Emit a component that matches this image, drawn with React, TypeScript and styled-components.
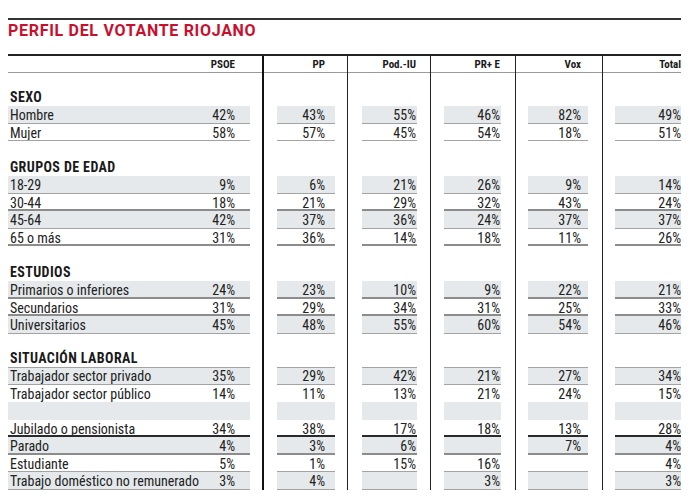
import styled, { createGlobalStyle, css } from "styled-components";

type Rule = "none" | "thin" | "thick" | "dark";

interface Row {
  label: string;
  values: string[];
  shade?: boolean;
  rule: Rule;
  top?: boolean;
}

interface Group {
  title: string;
  head: number;
  rows: Row[];
}

interface ColSpec {
  name: string;
  line: "none" | "heavy" | "light";
  ml: number;
  w: number;
  mr: number;
  pr: number;
}

const COLS: ColSpec[] = [
  { name: "PSOE", line: "none", ml: 0, w: 242, mr: 12, pr: 15 },
  { name: "PP", line: "heavy", ml: 13, w: 58, mr: 12, pr: 10 },
  { name: "Pod.-IU", line: "light", ml: 14, w: 55, mr: 13, pr: 1 },
  { name: "PR+ E", line: "light", ml: 13, w: 57, mr: 14, pr: 1 },
  { name: "Vox", line: "light", ml: 12, w: 60, mr: 14, pr: 7 },
  { name: "Total", line: "light", ml: 12, w: 66, mr: 0, pr: 0 },
];

const GROUPS: Group[] = [
  {
    title: "SEXO",
    head: 33,
    rows: [
      { label: "Hombre", values: ["42%", "43%", "55%", "46%", "82%", "49%"], shade: true, rule: "thin" },
      { label: "Mujer", values: ["58%", "57%", "45%", "54%", "18%", "51%"], rule: "thin" },
    ],
  },
  {
    title: "GRUPOS DE EDAD",
    head: 35,
    rows: [
      { label: "18-29", values: ["9%", "6%", "21%", "26%", "9%", "14%"], shade: true, rule: "thin" },
      { label: "30-44", values: ["18%", "21%", "29%", "32%", "43%", "24%"], rule: "thick" },
      { label: "45-64", values: ["42%", "37%", "36%", "24%", "37%", "37%"], shade: true, rule: "thin" },
      { label: "65 o más", values: ["31%", "36%", "14%", "18%", "11%", "26%"], rule: "thick" },
    ],
  },
  {
    title: "ESTUDIOS",
    head: 35,
    rows: [
      { label: "Primarios o inferiores", values: ["24%", "23%", "10%", "9%", "22%", "21%"], shade: true, rule: "thick" },
      { label: "Secundarios", values: ["31%", "29%", "34%", "31%", "25%", "33%"], rule: "thick" },
      { label: "Universitarios", values: ["45%", "48%", "55%", "60%", "54%", "46%"], shade: true, rule: "thin" },
    ],
  },
  {
    title: "SITUACIÓN LABORAL",
    head: 33.5,
    rows: [
      { label: "Trabajador sector privado", values: ["35%", "29%", "42%", "21%", "27%", "34%"], shade: true, rule: "thin", top: true },
      { label: "Trabajador sector público", values: ["14%", "11%", "13%", "21%", "24%", "15%"], rule: "none" },
      { label: "", values: ["", "", "", "", "", ""], shade: true, rule: "none" },
      { label: "Jubilado o pensionista", values: ["34%", "38%", "17%", "18%", "13%", "28%"], rule: "dark" },
      { label: "Parado", values: ["4%", "3%", "6%", "", "7%", "4%"], shade: true, rule: "thick" },
      { label: "Estudiante", values: ["5%", "1%", "15%", "16%", "", "4%"], rule: "thin" },
      { label: "Trabajo doméstico no remunerado", values: ["3%", "4%", "", "3%", "", "3%"], shade: true, rule: "thin" },
    ],
  },
];

const GlobalStyle = createGlobalStyle`
  html, body {
    margin: 0;
    background: #ffffff;
  }
`;

const Sheet = styled.div`
  width: 673px;
  padding: 18px 0 0 8px;
  font-family: Roboto, "Liberation Sans", sans-serif;
  color: #222;
`;

const TopRule = styled.div`
  border-top: 2px solid #333;
`;

const Title = styled.h1`
  margin: 1px 0 13px;
  height: 20px;
  line-height: 20px;
  font-size: 16px;
  font-weight: 700;
  color: #c8102e;
  letter-spacing: 0.7px;
`;

const Table = styled.div`
  display: flex;
  align-items: stretch;
  border-top: 2px solid #222;
  font-stretch: condensed;
`;

const lineStyles = {
  none: css``,
  heavy: css`
    border-left: 2px solid #111;
  `,
  light: css`
    border-left: 1px solid #222;
  `,
};

const Column = styled.div<{ $line: ColSpec["line"] }>`
  display: flex;
  flex-direction: column;
  ${(p) => lineStyles[p.$line]}
`;

const HeadCell = styled.div<{ $pr: number }>`
  height: 17px;
  padding: 1px ${(p) => p.$pr}px 0 0;
  box-sizing: border-box;
  line-height: 16px;
  font-size: 11px;
  font-weight: 700;
  text-align: right;
  color: #1a1a1a;
  border-bottom: 1px solid #9a9a9a;
`;

const GroupHead = styled.div<{ $h: number }>`
  height: ${(p) => p.$h}px;
  display: flex;
  align-items: flex-end;
  padding-left: 2px;
  line-height: 17px;
  font-size: 14px;
  font-weight: 700;
  letter-spacing: 0.4px;
  color: #1a1a1a;
  white-space: nowrap;
`;

const ruleStyles: Record<Rule, ReturnType<typeof css>> = {
  none: css``,
  thin: css`
    border-bottom: 1px solid #a3a3a3;
  `,
  thick: css`
    border-bottom: 2px solid #8c8c8c;
  `,
  dark: css`
    border-bottom: 2px solid #2a2a2a;
  `,
};

const Cell = styled.div<{
  $shade?: boolean;
  $rule: Rule;
  $top?: boolean;
  $ml: number;
  $w: number;
  $mr: number;
  $pr: number;
}>`
  display: flex;
  justify-content: space-between;
  box-sizing: border-box;
  height: 17.5px;
  width: ${(p) => p.$w}px;
  margin: 0 ${(p) => p.$mr}px 0 ${(p) => p.$ml}px;
  padding: 2px ${(p) => p.$pr}px 0 0;
  line-height: 15px;
  font-size: 14px;
  white-space: nowrap;
  overflow: hidden;
  background: ${(p) => (p.$shade ? "#e5e9eb" : "transparent")};
  ${(p) => ruleStyles[p.$rule]}
  ${(p) =>
    p.$top &&
    css`
      border-top: 1px solid #a3a3a3;
      padding-top: 1px;
    `}
`;

const Label = styled.span`
  padding-left: 2px;
`;

const Value = styled.span`
  margin-left: auto;
`;

export default function App() {
  return (
    <>
      <GlobalStyle />
      <Sheet>
        <TopRule />
        <Title>PERFIL DEL VOTANTE RIOJANO</Title>
        <Table>
          {COLS.map((col, ci) => (
            <Column key={col.name} $line={col.line}>
              <HeadCell $pr={col.mr + col.pr}>{col.name}</HeadCell>
              {GROUPS.map((g) => (
                <div key={g.title}>
                  <GroupHead $h={g.head}>{ci === 0 ? g.title : null}</GroupHead>
                  {g.rows.map((r, ri) => (
                    <Cell
                      key={ri}
                      $shade={r.shade}
                      $rule={r.rule}
                      $top={r.top}
                      $ml={col.ml}
                      $w={col.w}
                      $mr={col.mr}
                      $pr={col.pr}
                    >
                      {ci === 0 && <Label>{r.label}</Label>}
                      <Value>{r.values[ci]}</Value>
                    </Cell>
                  ))}
                </div>
              ))}
            </Column>
          ))}
        </Table>
      </Sheet>
    </>
  );
}
